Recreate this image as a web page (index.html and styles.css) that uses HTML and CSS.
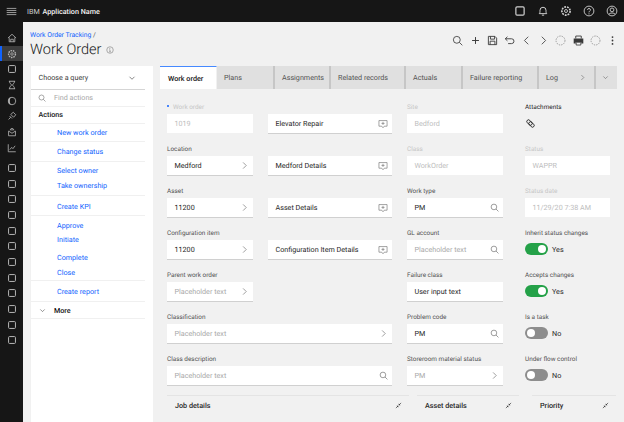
FILE: index.html
```html
<!DOCTYPE html>
<html lang="en">
<head>
<meta charset="utf-8">
<title>Work Order</title>
<link rel="stylesheet" href="styles.css">
</head>
<body>
<svg class="defs" aria-hidden="true">
  <symbol id="i-square" viewBox="0 0 16 16"><rect x="2.5" y="2.5" width="11" height="11" rx="1.5" fill="none" stroke="currentColor" stroke-width="1.6"/></symbol>
  <symbol id="i-search" viewBox="0 0 16 16"><circle cx="7" cy="7" r="5" fill="none" stroke="currentColor" stroke-width="1.2"/><path d="M10.7 10.7 15 15" stroke="currentColor" stroke-width="1.2"/></symbol>
  <symbol id="i-right" viewBox="0 0 16 16"><path d="M5.5 2.5 11 8l-5.500 5.500" fill="none" stroke="currentColor" stroke-width="1.2"/></symbol>
  <symbol id="i-left" viewBox="0 0 16 16"><path d="M10.500 2.500 5 8l5.500 5.500" fill="none" stroke="currentColor" stroke-width="1.200"/></symbol>
  <symbol id="i-down" viewBox="0 0 16 16"><path d="M3 5.500 8 10.500l5-5" fill="none" stroke="currentColor" stroke-width="1.200"/></symbol>
  <symbol id="i-note" viewBox="0 0 16 16"><path d="M1.500 2.500h13v9H10L8 14l-2-2.500H1.500z" fill="none" stroke="currentColor" stroke-width="1"/><path d="M8 4.500v5M5.500 7h5" stroke="currentColor" stroke-width="1"/></symbol>
  <symbol id="i-collapse" viewBox="0 0 16 16"><path d="M2 14l4.500-4.500M9.500 6.500 14 2" stroke="currentColor" stroke-width="1.400"/><path d="M3.500 8.500h4v4zM12.500 7.500h-4v-4z" fill="currentColor"/></symbol>
  <symbol id="i-dash" viewBox="0 0 16 16"><circle cx="8" cy="8" r="6.500" fill="none" stroke="currentColor" stroke-width="1" stroke-dasharray="2 1.500"/></symbol>
  <symbol id="i-gear" viewBox="0 0 16 16"><circle cx="8" cy="8" r="5.500" fill="none" stroke="currentColor" stroke-width="2.200" stroke-dasharray="2.500 1.300"/><circle cx="8" cy="8" r="2" fill="none" stroke="currentColor" stroke-width="1.200"/></symbol>
  <symbol id="i-home" viewBox="0 0 16 16"><path d="M1.500 8 8 2l6.500 6M3.500 7v7h9V7M6 14v-4h4v4" fill="none" stroke="currentColor" stroke-width="1.300"/></symbol>
  <symbol id="i-hour" viewBox="0 0 16 16"><path d="M3 2h10M3 14h10M4 2c0 4 3 4 3 6s-3 2-3 6M12 2c0 4-3 4-3 6s3 2 3 6" fill="none" stroke="currentColor" stroke-width="1.400"/></symbol>
  <symbol id="i-half" viewBox="0 0 16 16"><circle cx="8" cy="8" r="6" fill="none" stroke="currentColor" stroke-width="1.300"/><path d="M8 2a6 6 0 0 0 0 12 3.500 6 0 0 1 0-12z" fill="currentColor"/></symbol>
  <symbol id="i-link" viewBox="0 0 16 16"><path d="M2.500 13.500 6 10M6 5.500 10 2l4 4-3.500 4-4.500-4.500zM4 8l4 4" fill="none" stroke="currentColor" stroke-width="1.300"/></symbol>
  <symbol id="i-map" viewBox="0 0 16 16"><path d="M2.500 6.500 8 10l5.500-3.500V14h-11zM5 5.500a3 3 0 0 1 6 0M8 2v4" fill="none" stroke="currentColor" stroke-width="1.300"/></symbol>
  <symbol id="i-chart" viewBox="0 0 16 16"><path d="M2 2v12h12M4.500 10.500 7.500 7l2 2 3.500-4.500" fill="none" stroke="currentColor" stroke-width="1.300"/></symbol>
  <symbol id="i-bell" viewBox="0 0 16 16"><path d="M3 11.500c1-1 1-2 1-4.500a4 4 0 0 1 8 0c0 2.500 0 3.500 1 4.500zM6.500 13.500h3" fill="none" stroke="currentColor" stroke-width="1.300"/></symbol>
  <symbol id="i-help" viewBox="0 0 16 16"><circle cx="8" cy="8" r="6.500" fill="none" stroke="currentColor" stroke-width="1.200"/><path d="M6 6.500C6 4 10 4 10 6.500 10 8 8 8 8 9.800" fill="none" stroke="currentColor" stroke-width="1.200"/><circle cx="8" cy="11.700" r=".8" fill="currentColor"/></symbol>
  <symbol id="i-user" viewBox="0 0 16 16"><circle cx="8" cy="8" r="6.500" fill="none" stroke="currentColor" stroke-width="1.200"/><circle cx="8" cy="6.500" r="2.500" fill="none" stroke="currentColor" stroke-width="1.200"/><path d="M3.800 12.500c1-2.500 7.400-2.500 8.400 0" fill="none" stroke="currentColor" stroke-width="1.200"/></symbol>
  <symbol id="i-info" viewBox="0 0 16 16"><circle cx="8" cy="8" r="6.500" fill="none" stroke="currentColor" stroke-width="1.100"/><path d="M6.500 11.500h3M8 11.500V7.500H6.800" fill="none" stroke="currentColor" stroke-width="1.100"/><circle cx="7.800" cy="5" r=".9" fill="currentColor"/></symbol>
  <symbol id="i-plus" viewBox="0 0 16 16"><path d="M8 3v10M3 8h10" stroke="currentColor" stroke-width="1.400"/></symbol>
  <symbol id="i-save" viewBox="0 0 16 16"><path d="M2 2h9.500L14 4.500V14H2z" fill="none" stroke="currentColor" stroke-width="1.300"/><path d="M5 2v4h6V2M4.500 14V9h7v5" fill="none" stroke="currentColor" stroke-width="1.300"/></symbol>
  <symbol id="i-undo" viewBox="0 0 16 16"><path d="M5 2.500 1.800 5.500 5 8.500M2 5.500h9a3.500 3.500 0 0 1 0 7H6" fill="none" stroke="currentColor" stroke-width="1.300"/></symbol>
  <symbol id="i-print" viewBox="0 0 16 16"><path d="M4 5V1.500h8V5" fill="none" stroke="currentColor" stroke-width="1.300"/><path d="M1 5h14v7.500h-3V10H4v2.500H1z" fill="currentColor"/><path d="M4.600 10.600h6.800v4H4.600z" fill="none" stroke="currentColor" stroke-width="1.200"/></symbol>
  <symbol id="i-more" viewBox="0 0 16 16"><circle cx="8" cy="3" r="1.300" fill="currentColor"/><circle cx="8" cy="8" r="1.300" fill="currentColor"/><circle cx="8" cy="13" r="1.300" fill="currentColor"/></symbol>
  <symbol id="i-clip" viewBox="0 0 16 16"><g transform="rotate(45 8 8)"><rect x="0" y="5" width="11" height="6" rx="3" fill="none" stroke="currentColor" stroke-width="1.500"/><rect x="5" y="5" width="11" height="6" rx="3" fill="none" stroke="currentColor" stroke-width="1.500"/></g></symbol>
</svg>

<header class="topbar">
  <div class="topbar-left">
    <svg class="menu-icon" viewBox="0 0 16 16"><path d="M1 3.500h14M1 6.500h14M1 9.500h14M1 12.500h14" stroke="currentColor" stroke-width="1.300"/></svg>
    <span class="brand"><span class="brand-ibm">IBM</span> <b class="brand-name">Application Name</b></span>
  </div>
  <div class="topbar-right">
    <svg class="top-icon"><use href="#i-square"/></svg>
    <svg class="top-icon"><use href="#i-bell"/></svg>
    <svg class="top-icon"><use href="#i-gear"/></svg>
    <svg class="top-icon"><use href="#i-help"/></svg>
    <svg class="top-icon"><use href="#i-user"/></svg>
  </div>
</header>

<div class="shell">
  <nav class="rail">
    <div class="rail-item"><svg><use href="#i-home"/></svg></div>
    <div class="rail-item is-active"><svg><use href="#i-gear"/></svg></div>
    <div class="rail-item"><svg><use href="#i-square"/></svg></div>
    <div class="rail-item"><svg><use href="#i-hour"/></svg></div>
    <div class="rail-item"><svg><use href="#i-half"/></svg></div>
    <div class="rail-item"><svg><use href="#i-link"/></svg></div>
    <div class="rail-item"><svg><use href="#i-map"/></svg></div>
    <div class="rail-item rail-last-top"><svg><use href="#i-chart"/></svg></div>
    <div class="rail-item"><svg><use href="#i-square"/></svg></div>
    <div class="rail-item"><svg><use href="#i-square"/></svg></div>
    <div class="rail-item"><svg><use href="#i-square"/></svg></div>
    <div class="rail-item"><svg><use href="#i-square"/></svg></div>
    <div class="rail-item"><svg><use href="#i-square"/></svg></div>
    <div class="rail-item"><svg><use href="#i-square"/></svg></div>
    <div class="rail-item"><svg><use href="#i-square"/></svg></div>
    <div class="rail-item"><svg><use href="#i-square"/></svg></div>
    <div class="rail-item"><svg><use href="#i-square"/></svg></div>
    <div class="rail-item"><svg><use href="#i-square"/></svg></div>
    <div class="rail-item"><svg><use href="#i-square"/></svg></div>
    <div class="rail-item"><svg><use href="#i-square"/></svg></div>
  </nav>

  <main class="main">
    <div class="page-head">
      <div>
        <div class="crumb"><a>Work Order Tracking</a> <span>/</span></div>
        <h1 class="title">Work Order <svg class="info"><use href="#i-info"/></svg></h1>
      </div>
      <div class="tools">
        <svg><use href="#i-search"/></svg>
        <svg><use href="#i-plus"/></svg>
        <svg><use href="#i-save"/></svg>
        <svg><use href="#i-undo"/></svg>
        <svg><use href="#i-left"/></svg>
        <svg><use href="#i-right"/></svg>
        <svg class="faint"><use href="#i-dash"/></svg>
        <svg><use href="#i-print"/></svg>
        <svg class="faint"><use href="#i-dash"/></svg>
        <svg><use href="#i-more"/></svg>
      </div>
    </div>

    <div class="columns">
      <aside class="actions">
        <div class="query">Choose a query <svg><use href="#i-down"/></svg></div>
        <div class="find"><svg><use href="#i-search"/></svg><span>Find actions</span></div>
        <div class="act-title">Actions</div>
        <div class="group g-new"><a>New work order</a></div>
        <div class="group g-status"><a>Change status</a></div>
        <div class="group g-owner"><a>Select owner</a><a>Take ownership</a></div>
        <div class="group g-kpi"><a>Create KPI</a></div>
        <div class="group g-flow"><a>Approve</a><a>Initiate</a><a class="after-gap">Complete</a><a>Close</a></div>
        <div class="group g-report"><a>Create report</a></div>
        <div class="act-more"><svg><use href="#i-down"/></svg><b>More</b></div>
      </aside>

      <section class="content">
        <div class="tabs">
          <div class="tab is-active">Work order</div>
          <div class="tab">Plans</div>
          <div class="tab">Assignments</div>
          <div class="tab">Related records</div>
          <div class="tab">Actuals</div>
          <div class="tab">Failure reporting</div>
          <div class="tab tab-log">Log <svg><use href="#i-right"/></svg></div>
          <div class="tab tab-chev"><svg><use href="#i-down"/></svg></div>
        </div>

        <div class="form">
          <div class="cell"><label class="lbl faint-lbl has-req"><i class="req"></i>Work order</label><div class="field ro">1019</div></div>
          <div class="cell"><label class="lbl">&nbsp;</label><div class="field">Elevator Repair<svg class="note"><use href="#i-note"/></svg></div></div>
          <div class="cell"><label class="lbl faint-lbl">Site</label><div class="field ro">Bedford</div></div>
          <div class="cell c4"><label class="lbl strong-lbl">Attachments</label><svg class="clip"><use href="#i-clip"/></svg></div>

          <div class="cell"><label class="lbl">Location</label><div class="field">Medford<svg><use href="#i-right"/></svg></div></div>
          <div class="cell"><label class="lbl">&nbsp;</label><div class="field">Medford Details<svg class="note"><use href="#i-note"/></svg></div></div>
          <div class="cell"><label class="lbl faint-lbl">Class</label><div class="field ro">WorkOrder</div></div>
          <div class="cell c4"><label class="lbl faint-lbl">Status</label><div class="field ro">WAPPR</div></div>

          <div class="cell"><label class="lbl">Asset</label><div class="field">11200<svg><use href="#i-right"/></svg></div></div>
          <div class="cell"><label class="lbl">&nbsp;</label><div class="field">Asset Details<svg class="note"><use href="#i-note"/></svg></div></div>
          <div class="cell"><label class="lbl">Work type</label><div class="field">PM<svg><use href="#i-search"/></svg></div></div>
          <div class="cell c4"><label class="lbl faint-lbl">Status date</label><div class="field ro">11/29/20 7:38 AM</div></div>

          <div class="cell"><label class="lbl">Configuration item</label><div class="field">11200<svg><use href="#i-right"/></svg></div></div>
          <div class="cell"><label class="lbl">&nbsp;</label><div class="field">Configuration Item Details<svg class="note"><use href="#i-note"/></svg></div></div>
          <div class="cell"><label class="lbl">GL account</label><div class="field ph">Placeholder text<svg><use href="#i-search"/></svg></div></div>
          <div class="cell c4"><label class="lbl">Inherit status changes</label><div class="switch"><span class="toggle on"></span>Yes</div></div>

          <div class="cell"><label class="lbl">Parent work order</label><div class="field ph">Placeholder text<svg><use href="#i-right"/></svg></div></div>
          <div class="cell"></div>
          <div class="cell"><label class="lbl">Failure class</label><div class="field">User input text</div></div>
          <div class="cell c4"><label class="lbl">Accepts changes</label><div class="switch"><span class="toggle on"></span>Yes</div></div>

          <div class="cell span2"><label class="lbl">Classification</label><div class="field ph">Placeholder text<svg><use href="#i-right"/></svg></div></div>
          <div class="cell"><label class="lbl">Problem code</label><div class="field">PM<svg><use href="#i-search"/></svg></div></div>
          <div class="cell c4"><label class="lbl">Is a task</label><div class="switch"><span class="toggle"></span>No</div></div>

          <div class="cell span2"><label class="lbl">Class description</label><div class="field ph">Placeholder text<svg><use href="#i-search"/></svg></div></div>
          <div class="cell"><label class="lbl">Storeroom material status</label><div class="field ph">PM<svg><use href="#i-right"/></svg></div></div>
          <div class="cell c4"><label class="lbl">Under flow control</label><div class="switch"><span class="toggle"></span>No</div></div>
        </div>

        <div class="sections">
          <div class="sec">Job details<svg><use href="#i-collapse"/></svg></div>
          <div class="sec">Asset details<svg><use href="#i-collapse"/></svg></div>
          <div class="sec">Priority<svg><use href="#i-collapse"/></svg></div>
        </div>
      </section>
    </div>
  </main>
</div>
</body>
</html>
```
FILE: styles.css
```css
* { box-sizing: border-box; }
html, body { margin: 0; height: 422px; overflow: hidden; }
body { font-family: "Roboto", "Liberation Sans", sans-serif; font-size: 7.2px; color: #161616; background: #f1f1f1; text-rendering: geometricPrecision; }
.defs { display: none; }
svg { display: block; }

.topbar { height: 22px; background: #161616; color: #fff; display: flex; justify-content: space-between; align-items: center; padding: 0 0 0 6px; }
.topbar-left { display: flex; align-items: center; gap: 10px; }
.menu-icon { width: 11px; height: 11px; color: #a8a8a8; }
.brand { font-size: 7.200px; color: #d0d0d0; }
.brand-ibm { margin-right: 1px; }
.brand-name { font-weight: 500; color: #f4f4f4; }
.topbar-right { display: flex; align-items: center; gap: 11px; padding-right: 6px; color: #d0d0d0; }
.top-icon { width: 12px; height: 12px; }

.shell { display: flex; height: 400px; }
.rail { width: 23px; background: #161616; color: #b5b5b5; padding-top: 8px; flex: none; }
.rail-item { height: 15.7px; display: flex; align-items: center; justify-content: center; border-left: 2px solid transparent; padding-right: 2px; }
.rail-item svg { width: 10px; height: 10px; }
.rail-item.is-active { background: #3d3d3d; border-left-color: #0f62fe; }
.rail-last-top { margin-bottom: 4.500px; }

.main { flex: 1; padding: 0 7px 0 7px; min-width: 0; }
.page-head { height: 44px; display: flex; justify-content: space-between; }
.crumb { font-size: 6.800px; color: #525252; padding-top: 7.500px; line-height: 11px; white-space: nowrap; }
.crumb a { color: #0f62fe; }
.title { margin: 0; font-size: 14.500px; font-weight: 300; line-height: 18px; display: flex; align-items: center; gap: 5px; white-space: nowrap; }
.info { width: 8px; height: 8px; color: #6f6f6f; }
.tools { display: flex; align-items: center; gap: 6.200px; height: 36px; color: #393939; margin-right: -1px; }
.tools svg { width: 11px; height: 11px; }
.tools .faint { color: #777; }

.columns { display: flex; height: 356px; margin-left: 1px; }
.actions { width: 122px; background: #fff; padding-right: 8px; flex: none; }
.query { height: 23.500px; display: flex; align-items: center; justify-content: space-between; padding: 1px 9px 0 7.500px; border-bottom: 1.500px solid #d5d5d5; color: #393939; }
.query svg { width: 8px; height: 8px; }
.find { height: 17px; display: flex; align-items: center; padding-left: 7px; color: #a8a8a8; border-bottom: 1px solid #f0f0f0; }
.find svg { width: 8px; height: 8px; color: #6f6f6f; margin-right: 8px; }
.act-title { height: 17px; font-weight: 500; padding-left: 7.500px; display: flex; align-items: center; border-bottom: 1px solid #f0f0f0; }
.group { display: flex; flex-direction: column; border-bottom: 1.500px solid #f0f0f0; }
.group a { color: #0f62fe; padding-left: 26px; height: 15px; line-height: 15px; white-space: nowrap; }
.g-new { padding: 1px 0 1.500px; }
.g-status { padding: 1.500px 0 2px; }
.g-owner { padding: 1px 0 2px; }
.g-kpi { padding: 3.500px 0 1px; }
.g-flow { padding: 1.500px 0 0; }
.g-flow a:nth-child(2) { margin-top: -1px; }
.after-gap { margin-top: 3px; }
.g-report { padding: 3px 0 2.500px; }
.act-more { height: 17px; display: flex; align-items: center; padding: 1px 0 0 8px; border-bottom: 1.500px solid #f0f0f0; }
.act-more svg { width: 7px; height: 7px; margin-right: 8px; color: #393939; }
.act-more b { font-weight: 500; }

.content { margin-left: 7px; width: 457px; }
.tabs { display: grid; grid-template-columns: 57px 58px 56px 75px 57px 76px 57px 21px; height: 23px; }
.tab { background: #e0e0e0; border-right: 2px solid #c6c6c6; color: #525252; display: flex; align-items: center; justify-content: space-between; padding: 0 8px 0 7px; white-space: nowrap; }
.tab:first-child { border-right: 1px solid #f1f1f1; }
.tab:nth-child(7) { padding-right: 8px; }
.tab:last-child { border-right: 0; padding: 0 0 0 6px; }
.tab.is-active { background: #fff; color: #161616; font-weight: 500; border-top: 1.500px solid #4589ff; padding-left: 8px; }
.tab svg { width: 7px; height: 7px; color: #525252; }

.form { display: grid; grid-template-columns: 86px 124px 96px 92px; column-gap: 15px; grid-auto-rows: 42px; padding: 13px 0 0 7px; }
.c4 { margin-left: 7px; }
.cell { min-width: 0; }
.span2 { grid-column: span 2; }
.lbl { display: block; font-size: 6.400px; line-height: 8px; height: 12px; padding-top: 0.500px; color: #525252; white-space: nowrap; position: relative; }
.faint-lbl { color: #c6c6c6; }
.strong-lbl { color: #262626; }
.has-req { padding-left: 6px; }
.req { position: absolute; left: 0; top: 3px; width: 2px; height: 2px; border-radius: 50%; background: #0f62fe; }
.field { height: 20px; background: #fff; border-bottom: 1.500px solid #d0d0d0; display: flex; align-items: center; justify-content: space-between; padding: 0 4px 0 7.500px; color: #262626; white-space: nowrap; }
.field svg { width: 9px; height: 9px; color: #6f6f6f; flex: none; }
.field svg.note { width: 10px; height: 10px; }
.field.ro { border-bottom: 0; height: 19px; color: #bdbdbd; }
.field.ph { color: #a8a8a8; }
.clip { width: 9px; height: 9px; margin: 5px 0 0 1px; color: #161616; }
.switch { display: flex; align-items: center; height: 19px; gap: 4px; color: #262626; margin-top: -0.500px; }
.toggle { width: 23px; height: 12px; border-radius: 6px; background: #8d8d8d; position: relative; display: block; }
.toggle::after { content: ""; position: absolute; top: 2px; left: 2px; width: 8px; height: 8px; border-radius: 50%; background: #fff; }
.toggle.on { background: #24a148; }
.toggle.on::after { left: 13px; }

.sections { display: grid; grid-template-columns: 242px 102px 84px; column-gap: 8px; padding-left: 7px; margin-top: -1px; }
.sec { height: 20px; border-top: 1px solid #e4e4e4; padding: 0 0 0 8px; display: flex; align-items: center; justify-content: space-between; font-weight: 500; color: #262626; }
.sec:last-child { margin-left: 5px; width: 84px; }
.sec svg { width: 7px; height: 7px; margin-right: 7.500px; }
```
